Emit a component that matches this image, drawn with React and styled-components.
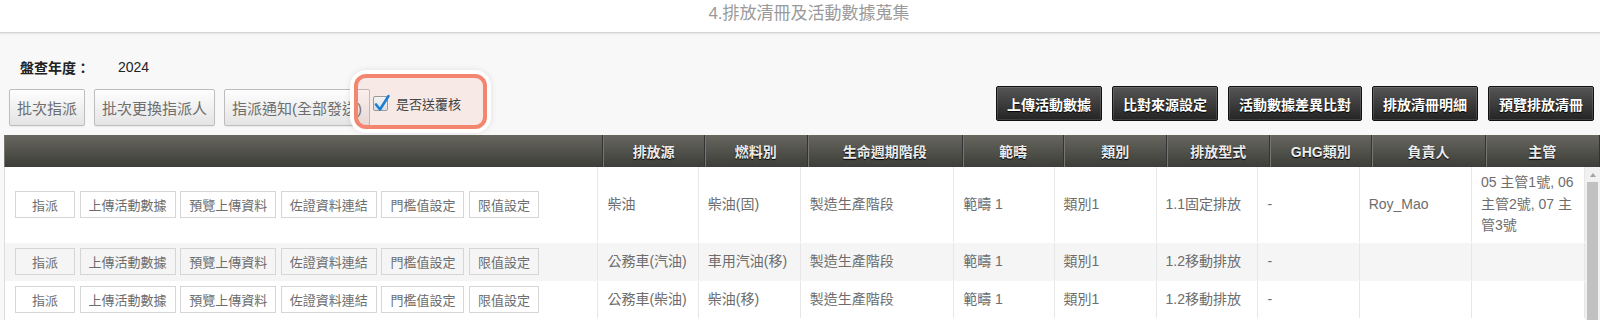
import React from 'react'
import styled, { createGlobalStyle } from 'styled-components'

const GlobalStyle = createGlobalStyle`
  body {
    margin: 0;
    background: #f8f8f8;
    font-family: "Liberation Sans", "Noto Sans CJK TC", sans-serif;
    overflow: hidden;
  }
`

const columns = [
  { key: 'actions', title: '', width: 37.5 },
  { key: 'source', title: '排放源', width: 6.35 },
  { key: 'fuel', title: '燃料別', width: 6.45 },
  { key: 'stage', title: '生命週期階段', width: 9.7 },
  { key: 'scope', title: '範疇', width: 6.35 },
  { key: 'category', title: '類別', width: 6.45 },
  { key: 'type', title: '排放型式', width: 6.45 },
  { key: 'ghg', title: 'GHG類別', width: 6.4 },
  { key: 'owner', title: '負責人', width: 7.1 },
  { key: 'manager', title: '主管', width: 7.15 }
]

const rows = [
  {
    source: '柴油',
    fuel: '柴油(固)',
    stage: '製造生產階段',
    scope: '範疇 1',
    category: '類別1',
    type: '1.1固定排放',
    ghg: '-',
    owner: 'Roy_Mao',
    manager: '05 主管1號, 06 主管2號, 07 主管3號'
  },
  {
    source: '公務車(汽油)',
    fuel: '車用汽油(移)',
    stage: '製造生產階段',
    scope: '範疇 1',
    category: '類別1',
    type: '1.2移動排放',
    ghg: '-',
    owner: '',
    manager: ''
  },
  {
    source: '公務車(柴油)',
    fuel: '柴油(移)',
    stage: '製造生產階段',
    scope: '範疇 1',
    category: '類別1',
    type: '1.2移動排放',
    ghg: '-',
    owner: '',
    manager: ''
  }
]

const rowActions = ['指派', '上傳活動數據', '預覽上傳資料', '佐證資料連結', '門檻值設定', '限值設定']
const topActions = ['上傳活動數據', '比對來源設定', '活動數據差異比對', '排放清冊明細', '預覽排放清冊']

const Page = styled.div`
  width: 1600px;
`

const TitleBar = styled.div`
  height: 33px;
  background: #fff;
  border-bottom: 1px solid #d4d4d4;
  box-shadow: 0 1px 2px rgba(0, 0, 0, 0.08);
  text-align: center;
  padding-left: 18px;
  box-sizing: border-box;
`

const Title = styled.h1`
  margin: 0;
  font-size: 17px;
  font-weight: normal;
  line-height: 28px;
  color: #9a9a9a;
`

const Content = styled.div`
  padding-left: 4px;
`

const YearRow = styled.div`
  display: flex;
  align-items: center;
  height: 20px;
  margin-top: 24px;
  padding-left: 16px;
  font-size: 14px;
  color: #222;
`

const YearLabel = styled.span`
  font-weight: bold;
  width: 98px;
`

const Toolbar = styled.div`
  display: flex;
  justify-content: space-between;
  align-items: flex-start;
  margin-top: 9px;
  height: 40px;
`

const LeftGroup = styled.div`
  display: flex;
  align-items: flex-start;
  gap: 9px;
  margin-top: 3px;
  margin-left: 5px;
`

const RightGroup = styled.div`
  display: flex;
  gap: 10px;
  margin-right: 6px;
`

const LightButton = styled.button`
  height: 37px;
  padding: 0 7px;
  font-family: inherit;
  font-size: 15px;
  color: #6e6e6e;
  background: linear-gradient(#fefefe, #e4e4e4);
  border: 1px solid #bdbdbd;
  border-radius: 2px;
  box-shadow: 0 1px 1px rgba(0, 0, 0, 0.06);
  white-space: nowrap;
`

const DarkButton = styled.button`
  height: 35px;
  padding: 0 10px;
  font-family: inherit;
  font-size: 14px;
  font-weight: bold;
  color: #fff;
  text-shadow: 0 1px 1px #000;
  background: linear-gradient(#565656, #242424);
  border: 1px solid #111;
  border-radius: 2px;
  box-shadow: inset 0 0 0 1px rgba(255, 255, 255, 0.12);
  white-space: nowrap;
`

const CheckLabel = styled.label`
  position: relative;
  display: inline-flex;
  align-items: center;
  gap: 8px;
  height: 20px;
  margin-top: 4px;
  margin-left: -6px;
  font-size: 13px;
  color: #444;
`

const CheckBox = styled.span`
  position: relative;
  width: 15px;
  height: 15px;
  box-sizing: border-box;
  border: 1px solid #9a9a9a;
  border-radius: 2px;
  background: linear-gradient(#f4f4f4, #dedede);
  z-index: 2;

  svg {
    position: absolute;
    left: -1px;
    top: -3px;
  }
`

const Highlight = styled.span`
  position: absolute;
  left: -19px;
  right: -26px;
  top: -19px;
  bottom: -16px;
  border: 4px solid #f4866f;
  border-radius: 12px;
  background: rgba(244, 134, 111, 0.12);
  box-shadow: 0 0 0 4px #fff, 0 0 6px 4px rgba(0, 0, 0, 0.1);
  pointer-events: none;
  z-index: 1;
`

const CheckText = styled.span`
  position: relative;
  z-index: 2;
`

const TableWrap = styled.div`
  margin-top: 9px;
`

const Table = styled.table`
  width: 100%;
  border-collapse: collapse;
  table-layout: fixed;
`

const HeadCell = styled.th`
  height: 32px;
  padding: 0 6px;
  font-size: 14px;
  font-weight: bold;
  color: #ececec;
  text-shadow: 0 1px 1px #000;
  text-align: center;
  background: linear-gradient(#67675f, #3d3d39);
  border-right: 1px solid #333;
  box-shadow: inset 1px 0 0 #77776f;
`

const BodyArea = styled.div`
  display: flex;
  height: 180px;
  background: #fff;
  border-left: 1px solid #ddd;
`

const BodyScroll = styled.div`
  flex: 1;
  min-width: 0;
  overflow: hidden;
`

const ScrollTrack = styled.div`
  display: flex;
  flex-direction: column;
  width: 15px;
  flex-shrink: 0;
  background: #f1f1f1;
`

const ScrollArrow = styled.div`
  display: flex;
  justify-content: center;
  align-items: center;
  height: 15px;

  &::before {
    content: '';
    border-left: 3.5px solid transparent;
    border-right: 3.5px solid transparent;
    border-bottom: 4px solid #a3a3a3;
  }
`

const ScrollThumb = styled.div`
  flex: 1;
  margin: 0 2px 6px;
  background: #c1c1c1;
`

const Row = styled.tr`
  background: ${p => (p.$striped ? '#f5f5f5' : '#fff')};
`

const Cell = styled.td`
  padding: 5px 9px;
  font-size: 14px;
  line-height: 21.7px;
  color: #6d6d6d;
  border-right: 1px solid #e6e6e6;
  border-bottom: 1px solid ${p => (p.$striped ? '#f5f5f5' : '#fff')};
  vertical-align: middle;
  word-break: break-word;
`

const ActionCell = styled(Cell)`
  padding: 5px 10px;
`

const ActionList = styled.div`
  display: flex;
  gap: 4.6px;
`

const RowButton = styled.button`
  height: 27px;
  min-width: 60px;
  padding: 0 8px;
  font-family: inherit;
  font-size: 13px;
  color: #6d6d6d;
  background: transparent;
  border: 1px solid #d6d6d6;
  white-space: nowrap;
`

const ColGroup = () => (
  <colgroup>
    {columns.map(c => (
      <col key={c.key} style={{ width: `${c.width}%` }} />
    ))}
  </colgroup>
)

const CheckMark = () => (
  <svg width="18" height="19" viewBox="0 0 18 19">
    <path
      d="M3 10.5 L7 15.5 L15.5 2"
      fill="none"
      stroke="#1b7fd4"
      strokeWidth="2.6"
      strokeLinecap="round"
      strokeLinejoin="round"
    />
  </svg>
)

const App = () => {
  return (
    <Page>
      <GlobalStyle />
      <TitleBar>
        <Title>4.排放清冊及活動數據蒐集</Title>
      </TitleBar>
      <Content>
        <YearRow>
          <YearLabel>盤查年度：</YearLabel>
          <span>2024</span>
        </YearRow>
        <Toolbar>
          <LeftGroup>
            <LightButton>批次指派</LightButton>
            <LightButton>批次更換指派人</LightButton>
            <LightButton>指派通知(全部發送)</LightButton>
            <CheckLabel>
              <Highlight />
              <CheckBox>
                <CheckMark />
              </CheckBox>
              <CheckText>是否送覆核</CheckText>
            </CheckLabel>
          </LeftGroup>
          <RightGroup>
            {topActions.map(a => (
              <DarkButton key={a}>{a}</DarkButton>
            ))}
          </RightGroup>
        </Toolbar>
        <TableWrap>
          <Table>
            <ColGroup />
            <thead>
              <tr>
                {columns.map(c => (
                  <HeadCell key={c.key}>{c.title}</HeadCell>
                ))}
              </tr>
            </thead>
          </Table>
          <BodyArea>
            <BodyScroll>
              <Table>
                <ColGroup />
                <tbody>
                  {rows.map((r, i) => (
                    <Row key={i} $striped={i % 2 === 1}>
                      <ActionCell $striped={i % 2 === 1}>
                        <ActionList>
                          {rowActions.map(a => (
                            <RowButton key={a}>{a}</RowButton>
                          ))}
                        </ActionList>
                      </ActionCell>
                      {columns.slice(1).map(c => (
                        <Cell key={c.key} $striped={i % 2 === 1}>
                          {r[c.key]}
                        </Cell>
                      ))}
                    </Row>
                  ))}
                </tbody>
              </Table>
            </BodyScroll>
            <ScrollTrack>
              <ScrollArrow />
              <ScrollThumb />
            </ScrollTrack>
          </BodyArea>
        </TableWrap>
      </Content>
    </Page>
  )
}

export default App
